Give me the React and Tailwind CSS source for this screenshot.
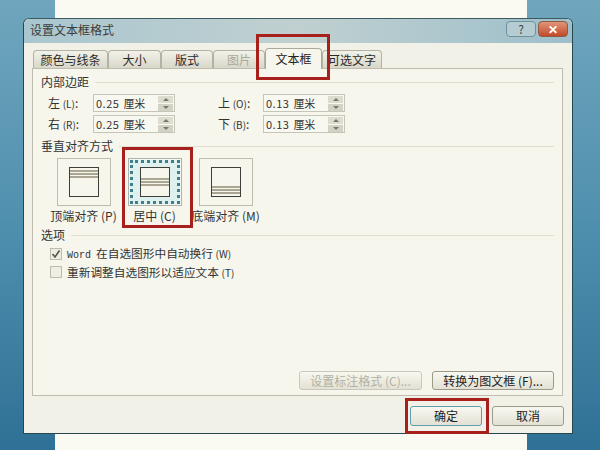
const font = "font-['Noto_Sans_CJK_SC','Liberation_Sans',sans-serif]";

function Tab({ label, width, disabled, active }) {
  if (active) {
    return (
      <div className={`${width} h-[21px] -mb-px z-10 flex items-center justify-center bg-[#f6f6ec] border border-b-0 border-[#a9a99c] rounded-t-sm text-[12px] text-[#222]`}>
        {label}
      </div>
    );
  }
  return (
    <div className={`${width} h-[18px] flex items-center justify-center border border-b-0 border-[#b3b2a6] rounded-t-sm bg-gradient-to-b from-[#f3f2e9] to-[#d9d7c9] text-[12px] ${disabled ? "text-[#aaa99c]" : "text-[#2b2b2b]"}`}>
      {label}
    </div>
  );
}

function Spinner() {
  return (
    <div className="w-[15px] h-[15px] flex flex-col gap-px mr-px">
      <div className="flex-1 flex items-center justify-center bg-[#dddccf]">
        <div className="w-0 h-0 border-x-[3px] border-x-transparent border-b-[3px] border-b-[#77776e]" />
      </div>
      <div className="flex-1 flex items-center justify-center bg-[#d3d2c5]">
        <div className="w-0 h-0 border-x-[3px] border-x-transparent border-t-[3px] border-t-[#77776e]" />
      </div>
    </div>
  );
}

function Field({ label, letter, value }) {
  return (
    <div className="flex items-center">
      <div className="w-[45px] text-[12px] leading-none text-[#333] whitespace-nowrap">{label} <span className="text-[10px]">({letter})</span>:</div>
      <div className="w-[82px] h-[18px] flex items-center justify-between bg-[#f8f8f0] border border-[#c6c5b9] pl-[2px]">
        <span className="text-[11px] leading-none text-[#333] whitespace-nowrap">
          <span className="tracking-[0.5px] mr-[4px]">{value}</span>厘米
        </span>
        <Spinner />
      </div>
    </div>
  );
}

function Heading({ children }) {
  return (
    <div className="flex items-center gap-1.5 text-[12px] leading-none text-[#333]">
      <span className="whitespace-nowrap">{children}</span>
      <div className="flex-1 h-px bg-[#e0dfd3]" />
    </div>
  );
}

function AlignOption({ align, label, selected }) {
  const justify = align === "top" ? "justify-start" : align === "middle" ? "justify-center" : "justify-end";
  return (
    <div className="w-[71px] flex flex-col items-center">
      <div className={`w-[54px] h-[48px] flex items-center justify-center border ${selected ? "border-[#a9b5ae] bg-[#f6f6ec]" : "border-[#bdbcae]"}`}>
        <div className={selected ? "w-[50px] h-[44px] flex items-center justify-center border-[3px] border-dotted border-[#3f7f8c] bg-[#dff1ee]" : "contents"}>
          <div className={`w-[30px] h-[30px] shrink-0 flex flex-col ${justify} gap-px bg-[#f6f6ec] border border-[#3f3f3a] ${align === "bottom" ? "pb-[2px]" : align === "top" ? "pt-[2px]" : ""}`}>
            <div className="h-[2px] bg-[#a9a592]" />
            <div className="h-[2px] bg-[#a9a592]" />
            <div className="h-[2px] bg-[#a9a592]" />
          </div>
        </div>
      </div>
      <div className="mt-[1px] text-[12px] leading-[18px] text-[#333] whitespace-nowrap">{label}</div>
    </div>
  );
}

function Check({ checked, children }) {
  return (
    <div className="flex items-center gap-[5px] h-[18px]">
      <div className="w-[12px] h-[12px] flex items-center justify-center bg-[#eeede2] border border-[#bdbcae]">
        {checked && (
          <svg width="10" height="10" viewBox="0 0 10 10">
            <path d="M1.5 5 L4 8 L8.5 1.5" fill="none" stroke="#55554f" strokeWidth="1.6" />
          </svg>
        )}
      </div>
      <span className="text-[11.7px] leading-none text-[#333] whitespace-nowrap">{children}</span>
    </div>
  );
}

function Btn({ children, width, height, disabled, focused }) {
  return (
    <div className={`${width} ${height} flex items-center justify-center rounded-[3px] border bg-gradient-to-b from-[#f8f8f0] to-[#e3e1d4] text-[12px] whitespace-nowrap ${disabled ? "border-[#c9c8bb] text-[#b2b1a4]" : focused ? "border-[#5f9eac] text-[#222]" : "border-[#9b9a8d] text-[#222]"}`}>
      {children}
    </div>
  );
}

export default function App() {
  return (
    <div className={`${font} relative w-[600px] h-[450px] overflow-hidden bg-gradient-to-b from-[#6fa6bd] via-[#4f8fae] to-[#2f7196]`}>
      {/* document page behind the dialog */}
      <div className="absolute left-[55px] top-0 w-[472px] h-[450px] bg-[#fafaf2]" />

      {/* dialog window */}
      <div className="absolute left-[23px] top-[18px] w-[550px] h-[416px] flex flex-col rounded-t-md border border-[#27474f] border-t-[#3c5a60] bg-[#f2f1e7]">
        <div className="h-[24px] flex items-center justify-between pl-[6px] pr-[4px] rounded-t-md bg-gradient-to-r from-[#a9c6cf] via-[#c0d0d0] to-[#9dbfcb]">
          <span className="text-[12px] leading-none text-[#3b3b3b] -mt-[2px]">设置文本框格式</span>
          <div className="flex gap-[2px] -mt-1">
            <div className="w-[30px] h-[16px] flex items-center justify-center rounded-sm border border-[#6f919b] bg-[#b4ccd2] text-[12px] leading-none text-[#444]">?</div>
            <div className="w-[30px] h-[16px] flex items-center justify-center rounded-sm border border-[#8d5a45] bg-gradient-to-b from-[#df9478] to-[#c2492a] text-[12px] font-bold leading-none text-white">✕</div>
          </div>
        </div>

        <div className="flex-1 flex flex-col pl-[8px] pr-[9px] pt-[3px]">
          <div className="h-[22px] pl-px flex items-end">
            <Tab label="颜色与线条" width="w-[75px]" />
            <Tab label="大小" width="w-[53px]" />
            <Tab label="版式" width="w-[52px]" />
            <Tab label="图片" width="w-[52px]" disabled />
            <Tab label="文本框" width="w-[57px]" active />
            <Tab label="可选文字" width="w-[60px]" />
          </div>

          <div className="h-[328px] flex flex-col border border-[#bdbcae] bg-[#f6f6ec] pl-[8px] pr-[8px] pt-[7px]">
            <Heading>内部边距</Heading>
            <div className="mt-[6px] grid grid-cols-[170px_1fr] gap-y-[3px] pl-[7px]">
              <Field label="左" letter="L" value="0.25" />
              <Field label="上" letter="O" value="0.13" />
              <Field label="右" letter="R" value="0.25" />
              <Field label="下" letter="B" value="0.13" />
            </div>

            <div className="mt-[7px]"><Heading>垂直对齐方式</Heading></div>
            <div className="mt-[6px] pl-[7px] flex">
              <AlignOption align="top" label="顶端对齐 (P)" />
              <AlignOption align="middle" label="居中 (C)" selected />
              <AlignOption align="bottom" label="底端对齐 (M)" />
            </div>

            <div className="mt-[4px]"><Heading>选项</Heading></div>
            <div className="mt-[4px] pl-[9px] flex flex-col">
              <Check checked><span className="font-['Liberation_Mono'] text-[10px] mr-[5px]">Word</span>在自选图形中自动换行 <span className="text-[10px]">(W)</span></Check>
              <Check>重新调整自选图形以适应文本 <span className="text-[10px]">(T)</span></Check>
            </div>

            <div className="mt-auto mb-[5px] flex justify-end gap-[10px]">
              <Btn width="w-[123px]" height="h-[19px]" disabled>设置标注格式 (C)...</Btn>
              <Btn width="w-[122px]" height="h-[19px]">转换为图文框 (F)...</Btn>
            </div>
          </div>

          <div className="mt-[10px] flex justify-end gap-[10px] -mr-[1px]">
            <Btn width="w-[72px]" height="h-[20px]" focused>确定</Btn>
            <Btn width="w-[72px]" height="h-[20px]">取消</Btn>
          </div>
        </div>
      </div>

      {/* red annotation boxes */}
      <div className="absolute left-[256px] top-[34px] w-[74px] h-[46px] border-[3px] border-[#a8201c]" />
      <div className="absolute left-[122px] top-[147px] w-[71px] h-[81px] border-[3px] border-[#a8201c]" />
      <div className="absolute left-[405px] top-[398px] w-[84px] h-[36px] border-[3px] border-[#a8201c]" />
    </div>
  );
}
